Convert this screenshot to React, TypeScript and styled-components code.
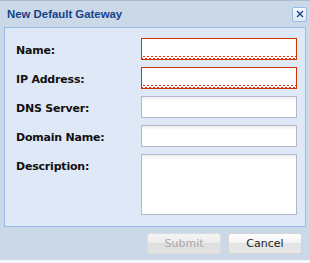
import React from "react";
import styled, { createGlobalStyle } from "styled-components";

const GlobalStyle = createGlobalStyle`
	html, body {
		margin: 0;
		padding: 0;
		background: #ffffff;
	}
	body {
		font-family: Tahoma, "DejaVu Sans", "Liberation Sans", sans-serif;
	}
`;

const fields = [
	{ label: "Name:", invalid: true },
	{ label: "IP Address:", invalid: true },
	{ label: "DNS Server:", invalid: false },
	{ label: "Domain Name:", invalid: false },
];

const App: React.FC = () => {
	return (
		<>
			<GlobalStyle />
			<Window>
				<TitleBar>
					<Title>New Default Gateway</Title>
					<CloseBtn>
						<svg width='8' height='8' viewBox='0 0 8 8'>
							<path d='M1 1 L7 7 M7 1 L1 7' stroke='#15428b' strokeWidth='1.4' />
						</svg>
					</CloseBtn>
				</TitleBar>
				<Body>
					<Form>
						{fields.map((f) => (
							<React.Fragment key={f.label}>
								<Label>{f.label}</Label>
								<Input invalid={f.invalid} />
							</React.Fragment>
						))}
						<Label>Description:</Label>
						<TextArea />
					</Form>
				</Body>
				<Footer>
					<Button disabled>Submit</Button>
					<Button>Cancel</Button>
				</Footer>
			</Window>
		</>
	);
};

export default App;

const Window = styled.div`
	width: 310px;
	height: 263px;
	box-sizing: border-box;
	background-color: #cbd8e7;
	border-top: 1px solid #aebcd0;
	border-bottom: 3px solid #f4f7fb;
	display: flex;
	flex-direction: column;
`;

const TitleBar = styled.div`
	height: 26px;
	display: flex;
	align-items: center;
	justify-content: space-between;
	padding: 0 3px 0 7px;
`;

const Title = styled.div`
	font-size: 11.4px;
	font-weight: bold;
	color: #15428b;
	font-family: "Liberation Sans", Arial, sans-serif;
	margin-top: -1px;
`;

const CloseBtn = styled.div`
	width: 13px;
	height: 13px;
	border: 1px solid #99bbe8;
	border-radius: 2px;
	background: linear-gradient(#f6f9fd, #dfe8f6);
	display: flex;
	align-items: center;
	justify-content: center;
`;

const Body = styled.div`
	margin: 0 4px;
	height: 200px;
	box-sizing: border-box;
	border: 1px solid #99bbe8;
	background-color: #dfe8f6;
	padding: 10px 8px 0 11px;
`;

const Form = styled.div`
	display: grid;
	grid-template-columns: 125px 156px;
	row-gap: 7px;
	align-items: start;
`;

const Label = styled.div`
	font-family: "DejaVu Sans", sans-serif;
	font-size: 11px;
	font-weight: bold;
	color: #111;
	padding-top: 6px;
	letter-spacing: -0.2px;
`;

const zigzag = `
	background-image:
		linear-gradient(135deg, #e83010 25%, transparent 25%),
		linear-gradient(225deg, #e83010 25%, transparent 25%),
		linear-gradient(315deg, #e83010 25%, transparent 25%),
		linear-gradient(45deg, #e83010 25%, transparent 25%);
	background-size: 4px 3px;
	background-position: -2px 100%, -2px 100%, 0 100%, 0 100%;
	background-repeat: repeat-x;
`;

const Input = styled.div<{ invalid?: boolean }>`
	height: 22px;
	box-sizing: border-box;
	border: 1px solid ${(p) => (p.invalid ? "#cc3300" : "#b5b8c8")};
	background-color: #ffffff;
	${(p) => (p.invalid ? zigzag : `background-image: linear-gradient(#eeeeee, #ffffff 4px);`)}
`;

const TextArea = styled.div`
	height: 61px;
	box-sizing: border-box;
	border: 1px solid #b5b8c8;
	background-color: #ffffff;
	background-image: linear-gradient(#eeeeee, #ffffff 5px);
`;

const Footer = styled.div`
	flex: 1;
	display: flex;
	justify-content: flex-end;
	align-items: flex-start;
	gap: 7px;
	padding: 6px 8px 0 0;
`;

const Button = styled.button`
	width: 74px;
	height: 21px;
	border: 1px solid #d4d4d4;
	border-radius: 3px;
	background: linear-gradient(#ffffff 0%, #f2f2f2 50%, #e3e3e3 50%, #e8e8e8 100%);
	font-family: Tahoma, "DejaVu Sans", sans-serif;
	font-size: 11px;
	color: #222;
	padding: 0;
	cursor: pointer;

	&:disabled {
		color: #a8a8a8;
		background: linear-gradient(#f4f4f4 0%, #ececec 50%, #dedede 50%, #e2e2e2 100%);
		border-color: #dcdcdc;
		cursor: default;
	}
`;
